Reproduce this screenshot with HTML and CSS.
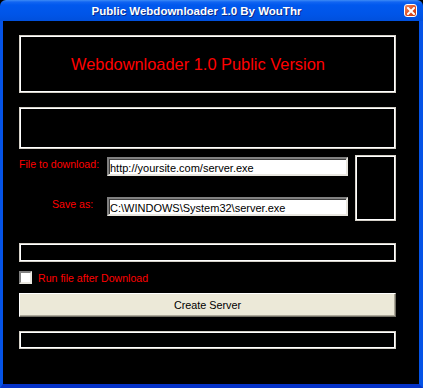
FILE: index.html
```html
<!DOCTYPE html>
<html lang="en">
<head>
	<meta charset="UTF-8">
	<title>Public Webdownloader 1.0 By WouThr</title>
	<link rel="stylesheet" href="styles.css">
</head>
<body>
	<div class="window">
		<div class="titlebar">
			<span class="title">Public Webdownloader 1.0 By WouThr</span>
			<span class="close">
				<svg width="8" height="8" viewBox="0 0 8 8"><path d="M1 1 L7 7 M7 1 L1 7" stroke="#fff" stroke-width="2" stroke-linecap="square"/></svg>
			</span>
		</div>
		<div class="client">
			<div class="frame banner">Webdownloader 1.0 Public Version</div>
			<div class="frame info"></div>
			<div class="form">
				<div class="fields">
					<div class="row">
						<label class="lbl">File to download:</label>
						<div class="edit">http://yoursite.com/server.exe</div>
					</div>
					<div class="row">
						<label class="lbl lbl-short">Save as:</label>
						<div class="edit">C:\WINDOWS\System32\server.exe</div>
					</div>
				</div>
				<div class="frame icon"></div>
			</div>
			<div class="frame status"></div>
			<div class="check">
				<span class="box"></span>
				<span class="check-text">Run file after Download</span>
			</div>
			<div class="button">Create Server</div>
			<div class="frame status last"></div>
		</div>
	</div>
</body>
</html>
```

FILE: styles.css
```css
html, body { margin: 0; background: #000; }
.window { width: 423px; height: 388px; display: flex; flex-direction: column; font-family: "Liberation Sans", Arial, sans-serif; font-size: 11px; }
.titlebar { height: 21px; flex: none; display: flex; align-items: center; background: linear-gradient(#3d8bf5 0, #1165f2 2px, #0058ee 5px, #0055e8 14px, #0050dd 21px); border-radius: 6px 6px 0 0; }
.title { flex: 1; text-align: center; padding-right: 11px; color: #fff; font-weight: bold; font-size: 11.5px; text-shadow: 1px 1px 0 #0a2b8a; }
.close { width: 11px; height: 11px; margin-right: 6px; border: 1px solid #fff; border-radius: 3px; background: linear-gradient(135deg, #f08a60, #dd4a1e 60%, #c83a10); display: flex; align-items: center; justify-content: center; }
.close svg { display: block; }
.client { flex: 1; background: #000; border-left: 3px solid #0553e6; border-right: 4px solid #0553e6; border-bottom: 4px solid #0532c8; padding: 14px 23px 0 16px; display: flex; flex-direction: column; }
.frame { box-sizing: border-box; border: 1px solid #d4d0c8; box-shadow: inset 0 0 0 1px #fff; }
.banner { height: 58px; display: flex; align-items: center; padding-left: 51px; color: #ff0000; font-size: 16.4px; }
.info { height: 42px; margin-top: 14px; }
.form { display: flex; margin-top: 6px; }
.fields { flex: 1; display: flex; flex-direction: column; gap: 21px; padding-top: 2px; }
.row { display: flex; align-items: flex-start; }
.lbl { width: 88px; color: #ff0000; font-size: 10.6px; padding-top: 1px; }
.lbl-short { padding-left: 33px; width: 55px; }
.edit { box-sizing: border-box; width: 241px; height: 19px; background: #fff; color: #000; font-size: 11px; padding: 3px 1px 0; border: 2px solid; border-color: #808080 #e8e6df #e8e6df #808080; box-shadow: inset 1px 1px 0 #404040; }
.icon { width: 41px; height: 66px; margin-left: 7px; }
.status { height: 19px; margin-top: 22px; }
.check { display: flex; align-items: center; margin-top: 9px; height: 13px; }
.box { box-sizing: border-box; width: 13px; height: 13px; background: #fff; border: 2px solid; border-color: #808080 #e8e6df #e8e6df #808080; }
.check-text { color: #ff0000; font-size: 10.6px; margin-left: 6px; }
.button { box-sizing: border-box; height: 24px; margin-top: 9px; background: #ece9d8; color: #000; font-size: 10.8px; display: flex; align-items: center; justify-content: center; border: 1px solid; border-color: #fff #716f64 #716f64 #fff; box-shadow: inset -1px -1px 0 #aca899; }
.last { height: 18px; margin-top: 14px; }
```
